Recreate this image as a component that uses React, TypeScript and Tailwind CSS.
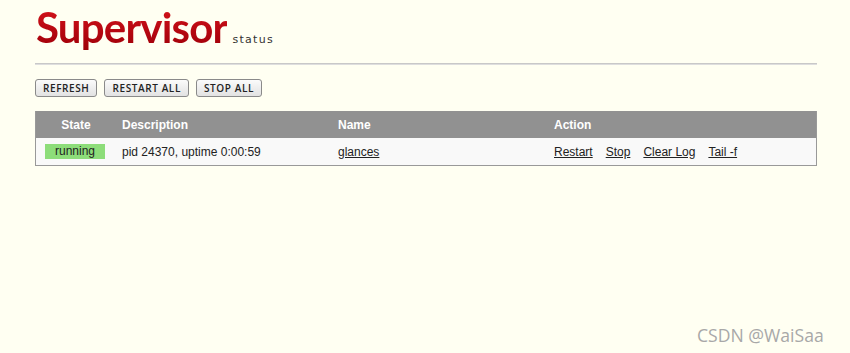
import React from "react"

const processes = [
  { state: "running", description: "pid 24370, uptime 0:00:59", name: "glances" },
]

export default function App() {
  return (
    <div className="min-h-[353px] w-full bg-[#fffff2] font-['Liberation_Sans',Arial,sans-serif] text-[#222]">
      <div className="w-[782px] ml-[35px] pt-[4px]">
        {/* header */}
        <div className="flex items-end h-[46px] pl-[1px]">
          <span className="font-['Lato',sans-serif] font-bold text-[42px] leading-[46px] tracking-[-0.8px] bg-gradient-to-b from-[#d8141c] to-[#9e0008] bg-clip-text text-transparent">
            Supervisor
          </span>
          <span className="ml-[5px] mb-[4px] font-['DejaVu_Sans',sans-serif] text-[11px] leading-[12px] tracking-[1.3px] text-[#333]">
            status
          </span>
        </div>

        <div className="mt-[13px] h-[2px] bg-[#c8c8c8] border-b border-[#dedede]" />

        {/* buttons */}
        <div className="mt-[14px] flex gap-[7px]">
          {["Refresh", "Restart All", "Stop All"].map((label) => (
            <button
              key={label}
              className="h-[18px] px-[7px] rounded-[3px] border border-[#8a8a8a] bg-gradient-to-b from-[#fbfbfb] to-[#e2e2e2] font-['Open_Sans',sans-serif] font-semibold text-[10px] leading-[16px] tracking-[0.6px] uppercase text-[#222]"
            >
              {label}
            </button>
          ))}
        </div>

        {/* table */}
        <div className="mt-[14px] border border-[#999] border-t-0">
          <div className="grid grid-cols-[80px_216px_216px_1fr] h-[27px] items-center bg-[#919191] text-white font-bold text-[12px]">
            <div className="text-center">State</div>
            <div className="pl-[6px]">Description</div>
            <div className="pl-[6px]">Name</div>
            <div className="pl-[6px]">Action</div>
          </div>
          {processes.map((p) => (
            <div
              key={p.name}
              className="grid grid-cols-[80px_216px_216px_1fr] h-[27px] items-center bg-[#f9f9f9] text-[12px]"
            >
              <div className="pl-[9px]">
                <div className="w-[60px] h-[15px] bg-[#8ddd7a] text-center leading-[14px] text-[#222]">
                  {p.state}
                </div>
              </div>
              <div className="pl-[6px]">{p.description}</div>
              <div className="pl-[6px] underline">{p.name}</div>
              <div className="pl-[6px] flex gap-[13px]">
                <span className="underline">Restart</span>
                <span className="underline">Stop</span>
                <span className="underline">Clear Log</span>
                <span className="underline">Tail -f</span>
              </div>
            </div>
          ))}
        </div>
      </div>

      <div className="absolute left-[697px] top-[322px] font-['Open_Sans',sans-serif] text-[17.6px] leading-[26px] text-[#a8a8a8]">
        CSDN @WaiSaa
      </div>
    </div>
  )
}
